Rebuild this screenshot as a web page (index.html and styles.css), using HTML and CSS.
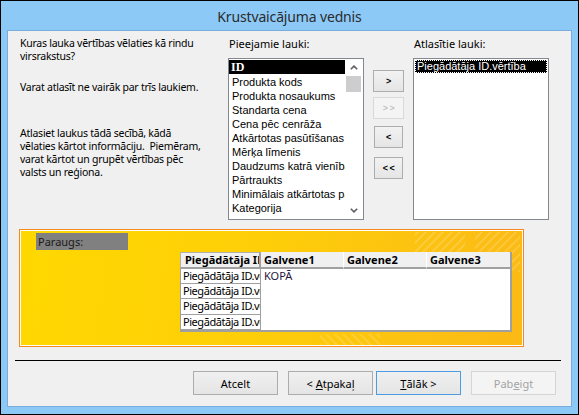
FILE: index.html
```html
<!DOCTYPE html>
<html lang="lv">
<head>
<meta charset="utf-8">
<title>Krustvaicājuma vednis</title>
<link rel="stylesheet" href="styles.css">
</head>
<body>
<div class="window">
  <div class="titlebar">Krustvaicājuma vednis</div>
  <div class="client">
    <div class="top">
      <div class="intro">
        <p class="p1">Kuras lauka vērtības vēlaties kā rindu<br>virsrakstus?</p>
        <p class="p2">Varat atlasīt ne vairāk par trīs laukiem.</p>
        <p class="p3">Atlasiet laukus tādā secībā, kādā<br>vēlaties kārtot informāciju.&nbsp; Piemēram,<br>varat kārtot un grupēt vērtības pēc<br>valsts un reģiona.</p>
      </div>
      <div class="fieldcol">
        <div class="label">Pieejamie lauki:</div>
        <div class="listbox">
          <div class="items">
            <div class="item item-id">ID</div>
            <div class="item">Produkta kods</div>
            <div class="item">Produkta nosaukums</div>
            <div class="item">Standarta cena</div>
            <div class="item">Cena pēc cenrāža</div>
            <div class="item">Atkārtotas pasūtīšanas līmenis</div>
            <div class="item">Mērķa līmenis</div>
            <div class="item">Daudzums katrā vienībā</div>
            <div class="item">Pārtraukts</div>
            <div class="item">Minimālais atkārtotas pasūtīšanas daudzums</div>
            <div class="item">Kategorija</div>
          </div>
          <div class="scrollbar">
            <div class="sb-btn"><svg width="8" height="5" viewBox="0 0 8 5"><path d="M0.8 4.3 L4 1.1 L7.2 4.3" fill="none" stroke="#606060" stroke-width="1.6"/></svg></div>
            <div class="thumb"></div>
            <div class="track"></div>
            <div class="sb-btn"><svg width="8" height="5" viewBox="0 0 8 5"><path d="M0.8 0.7 L4 3.9 L7.2 0.7" fill="none" stroke="#606060" stroke-width="1.6"/></svg></div>
          </div>
        </div>
      </div>
      <div class="moves">
        <div class="mv">&gt;</div>
        <div class="mv mv-off">&gt; &gt;</div>
        <div class="mv mv-narrow mv-back">&lt;</div>
        <div class="mv mv-narrow mv-backall">&lt; &lt;</div>
      </div>
      <div class="fieldcol">
        <div class="label">Atlasītie lauki:</div>
        <div class="listbox">
          <div class="items">
            <div class="item item-sel"><span class="focus">Piegādātāja ID.vērtība</span></div>
          </div>
        </div>
      </div>
    </div>

    <div class="preview">
      <div class="paraugs">Paraugs:</div>
      <div class="grid">
        <div class="hc hc-first">Piegādātāja ID</div>
        <div class="hc">Galvene1</div>
        <div class="hc">Galvene2</div>
        <div class="hc hc-last">Galvene3</div>
        <div class="lc">Piegādātāja ID.vērtība</div>
        <div class="body">KOPĀ</div>
        <div class="lc">Piegādātāja ID.vērtība</div>
        <div class="lc">Piegādātāja ID.vērtība</div>
        <div class="lc">Piegādātāja ID.vērtība</div>
      </div>
    </div>

    <div class="sep"></div>

    <div class="footer">
      <div class="btn">Atcelt</div>
      <div class="btn btn-back">&lt; <u>A</u>tpakaļ</div>
      <div class="btn btn-default"><u>T</u>ālāk &gt;</div>
      <div class="btn btn-off">Pab<u>e</u>igt</div>
    </div>
  </div>
</div>
</body>
</html>
```
FILE: styles.css
```css
* { box-sizing: border-box; }

body {
  margin: 0;
  font-family: "Noto Sans", "Open Sans", sans-serif;
  color: #000;
}

.window {
  width: 579px;
  height: 415px;
  border: 1px solid #000;
  background: #8dc9f7;
  display: flex;
  flex-direction: column;
}

.titlebar {
  height: 29px;
  display: flex;
  align-items: center;
  justify-content: center;
  font-size: 14px;
  letter-spacing: -0.15px;
  color: #2b2b2b;
  padding-top: 1px;
}

.client {
  flex: 1;
  margin: 0 6px 7px 6px;
  border: 1px solid #78aede;
  background: #f0f0f0;
  display: flex;
  flex-direction: column;
}

/* ---------- top section ---------- */
.top {
  height: 198px;
  padding: 6px 0 0 12px;
  display: flex;
  flex-shrink: 0;
}

.intro {
  width: 208px;
  font-size: 10.5px;
  letter-spacing: -0.25px;
  line-height: 13px;
  white-space: nowrap;
}

.intro p { margin: 0; }
.intro .p2 { margin-top: 18px; }
.intro .p3 { margin-top: 33px; }

.fieldcol { width: 136px; }

.label {
  height: 13px;
  line-height: 13px;
  font-size: 11px;
  padding-left: 1px;
  margin-bottom: 8px;
  white-space: nowrap;
}

.listbox {
  height: 162px;
  border: 1px solid #828790;
  background: #fff;
  display: flex;
}

.items {
  flex: 1;
  min-width: 0;
  padding-top: 1px;
  overflow: hidden;
  font-family: "Liberation Sans", Arial, sans-serif;
  font-size: 11px;
}

.item {
  height: 14px;
  line-height: 14px;
  padding-left: 3px;
  white-space: nowrap;
  overflow: hidden;
}

.item-id {
  background: #000;
  color: #fff;
  font-family: "Liberation Serif", serif;
  font-weight: bold;
  font-size: 12px;
  height: 14px;
  margin-bottom: 1px;
  padding-left: 2px;
}

.item-sel {
  margin: 0 1px;
  padding-left: 0;
  height: 13px;
  line-height: 13px;
  background: #000;
  color: #fff;
}

.item-sel .focus {
  display: block;
  height: 13px;
  padding-left: 2px;
  outline: 1px dotted #fff;
  outline-offset: -1px;
}

.scrollbar {
  width: 18px;
  display: flex;
  flex-direction: column;
}

.sb-btn {
  height: 17px;
  display: flex;
  align-items: center;
  justify-content: center;
}

.thumb {
  height: 16px;
  margin: 0 2px 0 1px;
  background: #cdcdcd;
}

.track { flex: 1; }

/* move buttons */
.moves {
  width: 31px;
  margin: 0 9px;
  padding-top: 33px;
  display: flex;
  flex-direction: column;
  align-items: center;
}

.mv {
  width: 31px;
  height: 22px;
  border: 1px solid #adadad;
  background: linear-gradient(#f2f2f2, #e5e5e5);
  font-family: "Liberation Sans", Arial, sans-serif;
  font-size: 9px;
  font-weight: bold;
  display: flex;
  align-items: center;
  justify-content: center;
  letter-spacing: -0.5px;
}

.mv-off {
  margin-top: 5px;
  border-color: #d9d9d9;
  background: #f4f4f4;
  color: #b0b0b0;
  font-weight: normal;
}

.mv-narrow { width: 29px; }
.mv-back { margin-top: 7px; }
.mv-backall { margin-top: 9px; }

/* ---------- preview ---------- */
.preview {
  flex-shrink: 0;
  margin-left: 11px;
  width: 505px;
  height: 118px;
  border: 1px solid #f5891f;
  box-shadow: inset 0 0 0 1px #fff;
  padding: 3px 0 0 16px;
  display: flex;
  flex-direction: column;
  align-items: flex-start;
  background:
    repeating-linear-gradient(-45deg, rgba(255,255,255,0.16) 0 2px, transparent 2px 6px) 395px 2px / 50px 22px no-repeat,
    repeating-linear-gradient(-45deg, rgba(255,255,255,0.16) 0 2px, transparent 2px 6px) 455px 2px / 45px 40px no-repeat,
    repeating-linear-gradient(45deg, rgba(255,255,255,0.14) 0 2px, transparent 2px 6px) 300px 104px / 60px 12px no-repeat,
    linear-gradient(135deg, transparent 0 48%, rgba(255,255,255,0.25) 48% 50%, transparent 50%) 262px 4px / 24px 24px no-repeat,
    linear-gradient(225deg, transparent 0 48%, rgba(255,255,255,0.25) 48% 50%, transparent 50%) 286px 4px / 24px 24px no-repeat,
    linear-gradient(100deg, #ffd800 0%, #fecf08 45%, #fcc112 80%, #fbb915 100%);
}

.paraugs {
  width: 92px;
  height: 17px;
  background: #808080;
  color: #1a1a1a;
  font-size: 11px;
  line-height: 17px;
  padding-left: 2px;
}

.grid {
  margin: 2px 0 0 144px;
  width: 332px;
  height: 80px;
  display: grid;
  grid-template-columns: 81px 83px 83px 83px;
  grid-template-rows: 17px 15px 15px 16px 15px;
  background: #fff;
  border-right: 2px solid #a0a0a0;
  border-bottom: 2px solid #a0a0a0;
  font-size: 11px;
}

.hc {
  background: #f0f0f0;
  border-bottom: 2px solid #a0a0a0;
  border-right: 1px solid #fff;
  font-weight: bold;
  line-height: 15px;
  padding-left: 3px;
  white-space: nowrap;
  overflow: hidden;
}

.hc-first {
  border: 1px solid #b0b0b0;
  border-right: 2px solid #a0a0a0;
  border-bottom-width: 2px;
  border-bottom-color: #a0a0a0;
  padding-left: 4px;
  line-height: 14px;
}

.hc-last { border-right: none; }

.lc {
  grid-column: 1;
  border: 1px solid #a0a0a0;
  border-top: none;
  padding-left: 2px;
  line-height: 14px;
  letter-spacing: -0.45px;
  white-space: nowrap;
  overflow: hidden;
}

.body {
  grid-column: 2 / 5;
  grid-row: 2 / 6;
  padding-left: 3px;
  line-height: 14px;
  color: #1f1440;
}

/* ---------- footer ---------- */
.sep {
  height: 1px;
  background: #000;
  margin: 13px 10px 0 7px;
  flex-shrink: 0;
}

.footer {
  margin-top: 10px;
  padding-right: 15px;
  display: flex;
  justify-content: flex-end;
}

.btn {
  width: 85px;
  height: 24px;
  border: 1px solid #acacac;
  background: linear-gradient(#f0f0f0, #e5e5e5);
  font-size: 11px;
  display: flex;
  align-items: center;
  justify-content: center;
  white-space: pre;
}

.btn-back { margin-left: 10px; }

.btn-default {
  margin-left: 3px;
  border-color: #4d9be3;
}

.btn-off {
  margin-left: 10px;
  border-color: #d5d5d5;
  background: #f4f4f4;
  color: #a3a3a3;
}
```
